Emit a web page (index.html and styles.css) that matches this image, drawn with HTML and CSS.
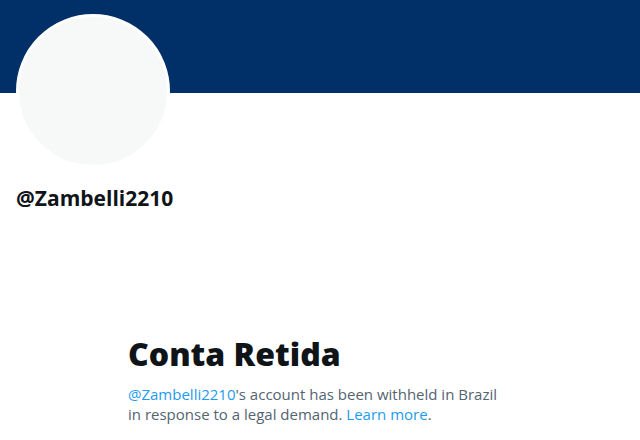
FILE: index.html
```html
<!DOCTYPE html>
<html lang="pt">
<head>
    <meta charset="UTF-8">
    <title>@Zambelli2210</title>
    <link rel="stylesheet" href="styles.css">
</head>
<body>
    <div class="banner"></div>
    <div class="profile">
        <div class="avatar"></div>
        <div class="handle">@Zambelli2210</div>
    </div>
    <div class="withheld">
        <h1>Conta Retida</h1>
        <p><a href="#">@Zambelli2210</a>'s account has been withheld in Brazil in response to a legal demand. <a href="#">Learn more</a>.</p>
    </div>
</body>
</html>
```

FILE: styles.css
```css
body {
    margin: 0;
    background: #fff;
    font-family: "Open Sans", "Noto Sans", sans-serif;
    color: #0f1419;
}
.banner {
    height: 93px;
    background-color: #003067;
}
.profile {
    padding: 0 16px;
}
.avatar {
    width: 148px;
    height: 148px;
    margin-top: -79px;
    border: 3px solid #fff;
    border-radius: 50%;
    background-color: #f7f9f9;
}
.handle {
    margin-top: 16px;
    font-size: 21px;
    font-weight: 700;
    line-height: 28px;
}
.withheld {
    margin: 124px 0 0 128px;
    width: 380px;
}
h1 {
    margin: 0;
    font-size: 32px;
    font-weight: 800;
    line-height: 36px;
}
p {
    margin: 12px 0 0;
    font-size: 15px;
    line-height: 20px;
    color: #536471;
}
a {
    color: #1d9bf0;
    text-decoration: none;
}
```
